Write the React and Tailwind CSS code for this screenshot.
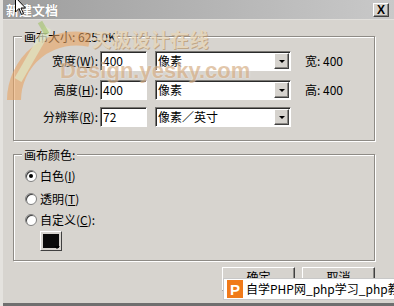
import React from 'react'

const font = { fontFamily: '"Noto Sans CJK SC", "Liberation Sans", sans-serif' }

const sunken = "bg-white border border-t-[#7a7874] border-l-[#7a7874] border-r-white border-b-white shadow-[inset_1px_1px_0_#2a2a2a]"
const raised = "bg-[#d6d3ce] border border-t-white border-l-white border-r-[#404040] border-b-[#404040] shadow-[inset_-1px_-1px_0_#8a8884]"
const etched = "border border-[#8e8b86] shadow-[inset_1px_1px_0_#fff,1px_1px_0_#fff]"

function Select({ value }) {
  return (
    <div className={`${sunken} w-[136px] h-[20px] flex items-center justify-between pl-[2px] pr-[1px]`}>
      <span className="text-[12px] leading-none text-black">{value}</span>
      <div className={`${raised} w-[15px] h-[16px] flex items-center justify-center`}>
        <div className="w-0 h-0 border-l-[3px] border-r-[3px] border-t-[3px] border-l-transparent border-r-transparent border-t-black" />
      </div>
    </div>
  )
}

function Row({ label, keyChar, value, unit, info, className }) {
  return (
    <div className={`flex items-center h-[20px] ${className}`}>
      <div className="w-[84px] text-right text-[12px] text-black leading-none">
        {label}(<span className="underline">{keyChar}</span>):
      </div>
      <div className={`${sunken} ml-[2px] w-[47px] h-[20px] flex items-center pl-[2px] text-[12px] leading-none`}>
        {value}
      </div>
      <div className="ml-[8px]">
        <Select value={unit} />
      </div>
      {info && <div className="ml-[14px] text-[12px] leading-none text-black">{info}</div>}
    </div>
  )
}

function Radio({ checked, label, keyChar, className }) {
  return (
    <div className={`flex items-center h-[16px] pl-[11px] ${className}`}>
      <div className="w-[12px] h-[12px] rounded-full bg-white border border-[#808080] shadow-[inset_1px_1px_0_#404040] flex items-center justify-center">
        {checked && <div className="w-[4px] h-[4px] rounded-full bg-black" />}
      </div>
      <span className="ml-[3px] text-[12px] leading-none text-black">
        {label}(<span className="underline">{keyChar}</span>){keyChar === 'C' ? ':' : ''}
      </span>
    </div>
  )
}

export default function App() {
  return (
    <div style={font} className="relative w-[394px] h-[306px] overflow-hidden bg-[#d7d4cf] flex flex-col border-l-[3px] border-l-[#e4e2de]">
      {/* title bar */}
      <div className="-ml-[3px] h-[20px] flex items-center justify-between pl-[6px] pr-[5px] bg-gradient-to-r from-[#9d9d9d] via-[#b3b3b3] to-[#c9c9c9] border-b border-[#e2e0dc]">
        <span className="text-[13px] font-bold text-white leading-none [text-shadow:0_0_1px_#777]">新建文档</span>
        <div className={`${raised} w-[16px] h-[14px] flex items-center justify-center text-[12px] font-bold leading-none text-black`} style={{ fontFamily: '"Liberation Sans", sans-serif' }}>
          X
        </div>
      </div>

      {/* canvas size group */}
      <div className={`${etched} relative ml-[10px] mt-[16px] w-[362px] h-[105px] pt-[14px]`}>
        <span className="absolute -top-[8px] left-[8px] px-[2px] bg-[#d7d4cf] text-[12px] leading-[16px] text-black">画布大小: 625.0K</span>
        <Row label="宽度" keyChar="W" value="400" unit="像素" info="宽:  400" />
        <Row label="高度" keyChar="H" value="400" unit="像素" info="高:  400" className="mt-[9px]" />
        <Row label="分辨率" keyChar="R" value="72" unit="像素／英寸" className="mt-[7px]" />
      </div>

      {/* canvas color group */}
      <div className={`${etched} relative ml-[10px] mt-[13px] w-[362px] h-[107px] pt-[13px]`}>
        <span className="absolute -top-[8px] left-[8px] px-[2px] bg-[#d7d4cf] text-[12px] leading-[16px] text-black">画布颜色:</span>
        <Radio checked label="白色" keyChar="I" />
        <Radio label="透明" keyChar="T" className="mt-[7px]" />
        <Radio label="自定义" keyChar="C" className="mt-[5px]" />
        <div className="ml-[26px] mt-[3px] w-[22px] h-[20px] relative border border-t-white border-l-white border-r-[#404040] border-b-[#404040] bg-[#d7d4cf] p-[2px]">
          <div className="w-full h-full bg-[#0a0a0a]" />
          <div className="absolute right-[1px] bottom-[1px] w-0 h-0 border-l-[3px] border-r-[3px] border-t-[3px] border-l-transparent border-r-transparent border-t-black" />
        </div>
      </div>

      {/* buttons */}
      <div className="flex justify-end gap-[7px] pr-[19px] mt-[6px]">
        <div className={`${raised} w-[73px] h-[24px] flex items-start justify-center pt-[3px] text-[12px] text-black leading-none`}>确定</div>
        <div className={`${raised} w-[73px] h-[24px] flex items-start justify-center pt-[3px] text-[12px] text-black leading-none`}>取消</div>
      </div>

      <div className="-ml-[3px] mt-auto h-[3px] bg-[#6f6f6f]" />

      {/* watermark */}
      <svg className="absolute -left-[3px] top-0 pointer-events-none" width="394" height="306">
        <path d="M 14 100 A 62 62 0 0 1 90 40" fill="none" stroke="#e8a462" strokeOpacity="0.6" strokeWidth="14" />
        <path d="M 48 28 L 18 80" fill="none" stroke="#dfe8c8" strokeOpacity="0.7" strokeWidth="8" />
        <path d="M 40 22 L 47 34" fill="none" stroke="#9cc060" strokeOpacity="0.55" strokeWidth="5" />
      </svg>
      <div className="absolute left-[89px] top-[29px] text-[19px] font-bold leading-none text-[#e8d6b8] opacity-75 tracking-[0.5px] [text-shadow:1px_1px_0_#b89870]">
        天极设计在线
      </div>
      <div className="absolute left-[57px] top-[60px] text-[22px] font-bold leading-none text-[#d6b088] opacity-70 [text-shadow:0_0_2px_#fff]" style={{ fontFamily: '"Liberation Sans", sans-serif' }}>
        Design.yesky.com
      </div>

      {/* cursor */}
      <svg className="absolute left-[12px] -top-[3px]" width="12" height="19" viewBox="0 0 12 19">
        <path d="M 0.5 0.5 L 0.5 15 L 4 11.5 L 6.5 17.5 L 8.5 16.5 L 6 11 L 10.5 11 Z" fill="#fff" stroke="#000" strokeWidth="1" />
      </svg>

      {/* bottom-right overlay */}
      <div className="absolute left-[220px] top-[278px] w-[175px] h-[22px] bg-white border border-[#c8c8c8] flex items-center pl-[3px] overflow-hidden">
        <div className="w-[16px] h-[18px] bg-[#f07a1a] flex items-center justify-center text-white font-bold text-[15px] leading-none shrink-0" style={{ fontFamily: '"Liberation Sans", sans-serif' }}>
          P
        </div>
        <span className="ml-[3px] text-[12px] leading-none text-black whitespace-nowrap">自学PHP网_php学习_php教程</span>
      </div>
    </div>
  )
}
